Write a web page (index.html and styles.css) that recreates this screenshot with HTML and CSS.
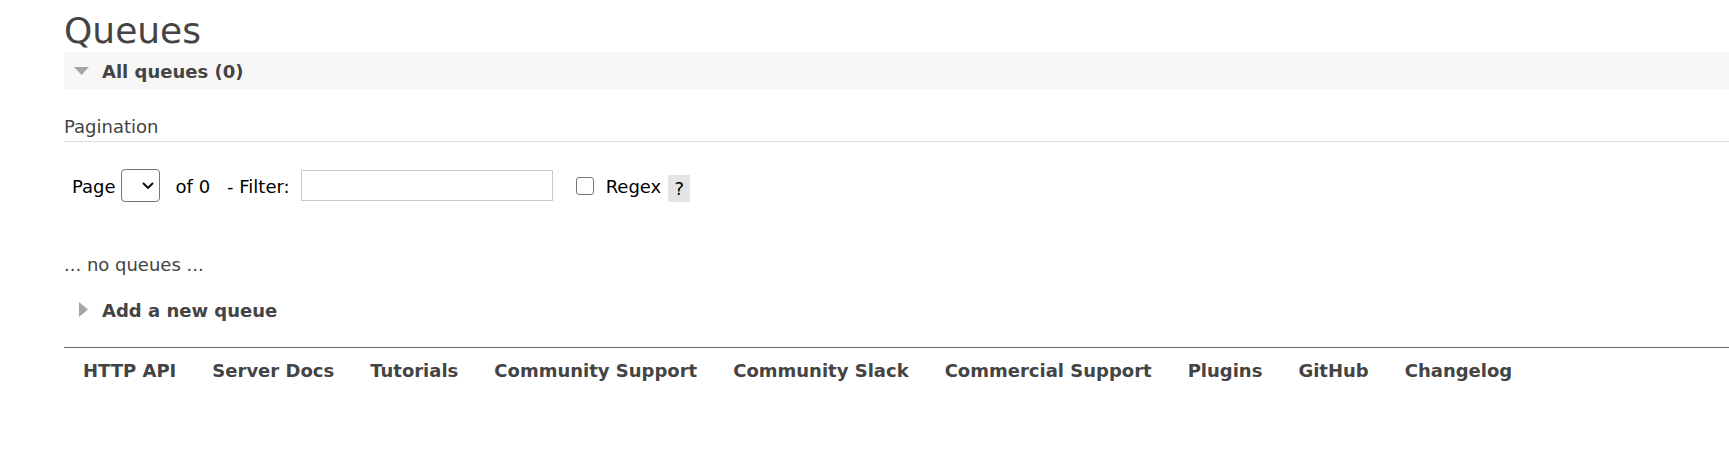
FILE: index.html
```html
<!DOCTYPE html>
<html lang="en">
<head>
<meta charset="utf-8">
<title>Queues</title>
<link rel="stylesheet" href="styles.css">
</head>
<body>
<main class="main">
  <h1 class="title">Queues</h1>
  <h2 class="section section-open"><svg class="tri-down" width="15" height="8" viewBox="0 0 15 8"><polygon points="0,0 15,0 7.5,8" fill="#a6a6a6"/></svg><span>All queues (0)</span></h2>
  <h3 class="subhead">Pagination</h3>
  <div class="pager">
    <span class="lbl lbl-page">Page</span>
    <span class="select-wrap"><select class="select"></select><svg class="chev" width="12" height="7" viewBox="0 0 12 7"><polyline points="1,1 6,6 11,1" fill="none" stroke="#000" stroke-width="1.8"/></svg></span>
    <span class="lbl lbl-of">of 0</span>
    <span class="lbl lbl-filter">- Filter:</span>
    <input class="filter" type="text">
    <input class="check" type="checkbox">
    <span class="lbl lbl-regex">Regex</span>
    <span class="help">?</span>
  </div>
  <p class="empty">... no queues ...</p>
  <h2 class="section section-closed"><svg class="tri-right" width="9" height="15" viewBox="0 0 9 15"><polygon points="0,0 9,7.5 0,15" fill="#a6a6a6"/></svg><span>Add a new queue</span></h2>
  <footer class="footer">
    <a href="#">HTTP API</a>
    <a href="#">Server Docs</a>
    <a href="#">Tutorials</a>
    <a href="#">Community Support</a>
    <a href="#">Community Slack</a>
    <a href="#">Commercial Support</a>
    <a href="#">Plugins</a>
    <a href="#">GitHub</a>
    <a href="#">Changelog</a>
  </footer>
</main>
</body>
</html>
```

FILE: styles.css
```css
html, body {
  margin: 0;
  padding: 0;
  background: #fff;
}
body {
  font-family: "DejaVu Sans", Verdana, sans-serif;
  font-size: 18px;
  color: #444;
}
.main {
  padding-left: 64px;
  padding-top: 1px;
}
.title {
  font-size: 36px;
  font-weight: normal;
  line-height: 36px;
  margin: 12px 0 3px 0;
  color: #444;
}
.section {
  font-size: 18px;
  font-weight: bold;
  height: 35px;
  line-height: 35px;
  padding-top: 2px;
  margin: 0;
  color: #444;
  white-space: nowrap;
}
.section-open {
  background: #f7f7f7;
}
.tri-down {
  display: inline-block;
  vertical-align: 3px;
  margin-left: 10px;
  margin-right: 13px;
}
.tri-right {
  display: inline-block;
  vertical-align: 0;
  margin-left: 15px;
  margin-right: 14px;
}
.subhead {
  font-size: 18px;
  font-weight: normal;
  line-height: 22px;
  margin: 27px 0 0 0;
  padding-bottom: 3px;
  border-bottom: 1px solid #dedede;
  color: #444;
}
.pager {
  display: flex;
  align-items: center;
  height: 41px;
  margin-top: 23px;
  padding-left: 8px;
  color: #000;
}
.lbl {
  line-height: 21px;
  padding-top: 2px;
  white-space: nowrap;
}
.lbl-page { margin-right: 5px; }
.lbl-of { margin-left: 16px; margin-right: 17px; }
.lbl-filter { margin-right: 11px; }
.select-wrap {
  position: relative;
  display: inline-flex;
  width: 39px;
  height: 33px;
}
.select {
  appearance: none;
  -webkit-appearance: none;
  width: 39px;
  height: 33px;
  margin: 0;
  border: 1px solid #767676;
  border-radius: 4px;
  background: #fff;
  box-sizing: border-box;
}
.chev {
  position: absolute;
  left: 21px;
  top: 13px;
}
.filter {
  width: 252px;
  height: 31px;
  box-sizing: border-box;
  margin: 0;
  border: 1px solid #c8c8c8;
  padding: 0 4px;
  font: inherit;
}
.check {
  appearance: none;
  -webkit-appearance: none;
  width: 18px;
  height: 18px;
  box-sizing: border-box;
  margin: 0 12px 0 23px;
  border: 1.5px solid #767676;
  border-radius: 3px;
  background: #fff;
}
.help {
  display: inline-flex;
  align-items: center;
  justify-content: center;
  width: 22px;
  height: 27px;
  margin-left: 7px;
  margin-top: 6px;
  background: #e4e4e4;
  color: #000;
  line-height: 21px;
}
.empty {
  margin: 48px 0 0 0;
  line-height: 21px;
  color: #444;
}
.section-closed {
  margin-top: 16px;
}
.footer {
  display: flex;
  gap: 36px;
  margin-top: 19px;
  border-top: 1px solid #666;
  padding: 12px 0 0 19px;
  line-height: 21px;
}
.footer a {
  color: #444;
  font-weight: bold;
  text-decoration: none;
  white-space: nowrap;
}
```
